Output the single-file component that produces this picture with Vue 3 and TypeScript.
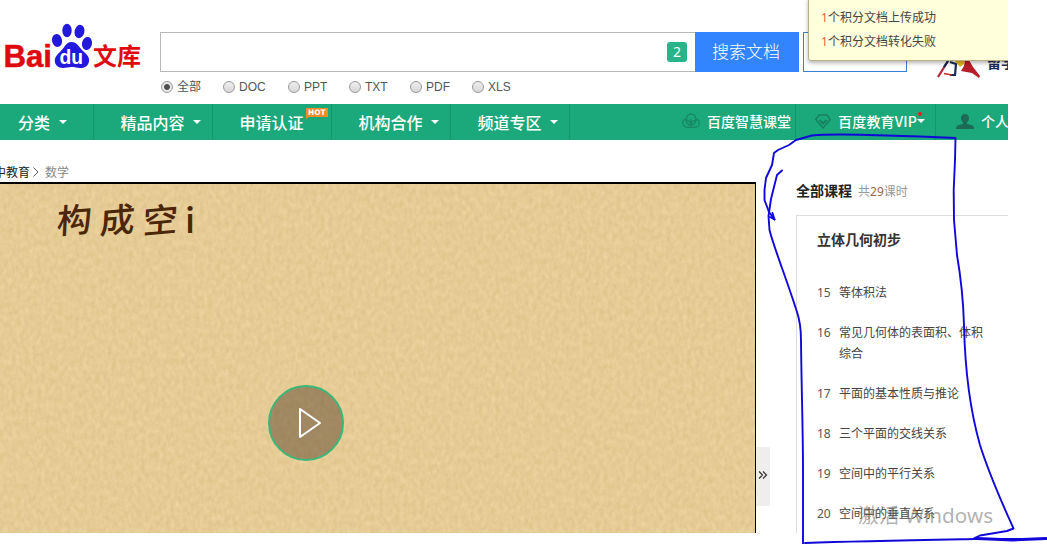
<script setup lang="ts">
interface NavItem { label: string; caret: boolean; hot?: boolean }
interface Lesson { no: number; title: string }

const formats: string[] = ['全部', 'DOC', 'PPT', 'TXT', 'PDF', 'XLS']
const nav: NavItem[] = [
  { label: '分类', caret: true },
  { label: '精品内容', caret: true },
  { label: '申请认证', caret: false, hot: true },
  { label: '机构合作', caret: true },
  { label: '频道专区', caret: true },
]
const notices: string[] = ['个积分文档上传成功', '个积分文档转化失败']
const titleChars: string[] = ['构', '成', '空']
const lessons: Lesson[] = [
  { no: 15, title: '等体积法' },
  { no: 16, title: '常见几何体的表面积、体积综合' },
  { no: 17, title: '平面的基本性质与推论' },
  { no: 18, title: '三个平面的交线关系' },
  { no: 19, title: '空间中的平行关系' },
  { no: 20, title: '空间中的垂直关系' },
]
</script>

<template>
  <div class="screen">
    <div class="site">
      <header class="header">
        <svg class="logo" width="142" height="54" viewBox="0 0 142 54">
          <g fill="#2319dc">
            <ellipse cx="57" cy="20.500" rx="5" ry="6.500" transform="rotate(-12 57 20.500)" />
            <ellipse cx="67" cy="10.500" rx="4.700" ry="6.700" />
            <ellipse cx="79.500" cy="11.500" rx="4.900" ry="6.700" transform="rotate(12 79.500 11.500)" />
            <ellipse cx="87" cy="23.500" rx="5" ry="6.600" transform="rotate(12 87 23.500)" />
            <path d="M71.500 22C77 22 79 27 83 31c4 3.500 6.500 6 6 10-.5 5-4 7.200-9 7-3-.3-5-1-8.500-1s-5 1-8.500 1c-5 0-8-3-8.200-7-.2-4 3-7 6-10 4-4 5.500-9 10.700-9z" />
          </g>
          <text class="latin" x="3.500" y="46.700" textLength="48.500" lengthAdjust="spacingAndGlyphs" fill="#df0a0f" stroke="#df0a0f" stroke-width=".5" font-size="31">Bai</text>
          <text class="latin" x="59.500" y="44" textLength="23.500" lengthAdjust="spacingAndGlyphs" fill="#fff" font-size="20">du</text>
          <text class="han" x="93" y="45.300" textLength="48" lengthAdjust="spacingAndGlyphs" fill="#df0a0f" font-size="24">文库</text>
        </svg>

        <div class="search">
          <div class="row">
            <div class="field"><span class="count">2</span></div>
            <button class="submit">搜索文档</button>
            <div class="upload"></div>
          </div>
          <div class="formats">
            <label v-for="(f, i) in formats" :key="f" :class="'format f' + i">
              <i class="radio" :class="{ on: i === 0 }"></i>{{ f }}
            </label>
          </div>
        </div>

        <div class="promo">
          <svg width="44" height="30" viewBox="0 0 44 30">
            <path d="M2 27L12 11" stroke="#b52430" stroke-width="2.200" />
            <path d="M8 17L12 11M14 12L20 14 19 25H14" stroke="#182b59" stroke-width="2.200" fill="none" />
            <path d="M8 23.500l8 1.500" stroke="#c52a28" stroke-width="1.500" />
            <path d="M18 10H29L28 14 24 17z" fill="#e8b622" />
            <path d="M29 10H33L37 17 44 26 43 28 36 23 25 21 28 16z" fill="#b61d28" />
          </svg>
          <span>留学</span>
        </div>

        <div class="notice">
          <p v-for="n in notices" :key="n"><b>1</b>{{ n }}</p>
        </div>
      </header>

      <nav class="nav">
        <a v-for="(n, i) in nav" :key="n.label" class="item" :class="{ first: i === 0 }">
          {{ n.label }}<i v-if="n.caret" class="caret"></i>
          <svg v-if="n.hot" class="hot" width="22" height="11" viewBox="0 0 22 11">
            <path d="M0 0H22V9H3L0 11z" fill="#ef8b2c" />
            <text x="2" y="7.300" textLength="17.500" lengthAdjust="spacingAndGlyphs" fill="#fff">HOT</text>
          </svg>
        </a>
        <div class="account">
          <a class="link class-link">
            <svg width="18" height="16" viewBox="0 0 18 16" fill="none" stroke="#178a65" stroke-width="1.400">
              <path d="M4.500 6C1.500 6 .8 8 .8 10S2.500 14.200 5 14.200h8c2.500 0 4.200-2 4.200-4.200s-1-4-3.700-4" />
              <path d="M4.500 7C4 3 6 1 9 1s5 2 4.500 6M9 14V6M9 12C6 12 4.500 10 4 7.500 7 7.500 9 9 9 12c0-3 2-4.500 5-4.500-.5 2.500-2 4.500-5 4.500" />
            </svg>
            百度智慧课堂
          </a>
          <a class="link vip-link">
            <svg width="16" height="15" viewBox="0 0 16 15" fill="none" stroke="#17805f" stroke-width="1.500">
              <path d="M4 1H12L15.200 5.500 8 14 .8 5.500z" /><path d="M4.500 6L8 9.500 11.500 6" stroke-width="2" />
            </svg>
            <span>百度教育VIP</span><i class="caret"></i><i class="dot"></i>
          </a>
          <a class="link me-link">
            <svg width="18" height="15" viewBox="0 0 18 15" fill="#1d6b56">
              <path d="M9 0c2.700 0 4.200 2 4 4.500-.2 2-1 3.200-2 4v1.200l5 1.500c1.200.4 2 1.400 2 3.800H0c0-2.400.8-3.400 2-3.800l5-1.500V8.500c-1-.8-1.800-2-2-4C4.800 2 6.300 0 9 0z" />
            </svg>
            个人
          </a>
        </div>
      </nav>

      <main class="main">
        <section class="left">
          <div class="crumbs">
            <span class="parent">高中教育</span>
            <svg width="6" height="10" viewBox="0 0 6 10" fill="none" stroke="#555"><path d="M.5.500L5 5 .5 9.500" /></svg>
            <span class="current">数学</span>
          </div>
          <div class="stage">
            <div class="video">
              <svg class="paper" width="100%" height="100%">
                <filter id="grain" x="0" y="0" width="100%" height="100%" color-interpolation-filters="sRGB">
                  <feTurbulence type="fractalNoise" baseFrequency=".24 .16" numOctaves="3" seed="8" />
                  <feColorMatrix values=".07 .025 0 0 .853  .08 .025 0 0 .744  .11 .025 0 0 .517  0 0 0 0 1" />
                </filter>
                <rect width="100%" height="100%" filter="url(#grain)" />
              </svg>
              <div class="title"><span v-for="c in titleChars" :key="c" class="brush">{{ c }}</span><span class="partial">i</span></div>
              <button class="play">
                <svg width="24" height="32" viewBox="0 0 24 32" fill="none" stroke="#fff" stroke-width="2" stroke-linejoin="round">
                  <path d="M2 2L22 16 2 30z" />
                </svg>
              </button>
            </div>
            <button class="fold">
              <svg width="10" height="8" viewBox="0 0 10 8" fill="none" stroke="#333" stroke-width="1.200"><path d="M1 .5L4.500 4 1 7.500M5 .5L8.500 4 5 7.500" /></svg>
            </button>
          </div>
        </section>

        <aside class="course">
          <div class="course-head"><strong>全部课程</strong><span>共<em>29</em>课时</span></div>
          <div class="panel">
            <h3>立体几何初步</h3>
            <ol>
              <li v-for="l in lessons" :key="l.no"><span class="no">{{ l.no }}</span><span class="name">{{ l.title }}</span></li>
            </ol>
          </div>
        </aside>
      </main>
    </div>

    <div class="watermark">激活 Windows</div>
    <svg class="ink" width="1047" height="544" viewBox="0 0 1047 544" fill="none" stroke="#1108d8" stroke-width="1.900" stroke-linejoin="round" stroke-linecap="round">
      <path d="M774.500 219.500L769 212 764.500 200V190L766 178 772 165 774 153 778 150 789 145 796 140 812 135.500Q828 134 860 134.800L920 136.500 955.500 138 955 160 953.700 190 954 220 957 255Q963 290 964 325C965 370 970 410 980 445 990 477 1003 505 1013.500 528.500L1007 531 980 535.500 974.500 538" />
      <path d="M782 170.500L777 175 771 199 768.500 216 769.500 230C774 248 787 280 797 312Q801 324 801 340C801.500 390 803 430 803 470V544" />
      <path d="M772.500 213L774.500 219.500 770 217M805 543C860 541 920 540 975 539H1047" />
      <path d="M977 538.500L1013 540 1046 538.500" stroke-width="3" />
    </svg>
  </div>
</template>

<style>
html, body { margin: 0; background: #fff; overflow: hidden; }
</style>

<style scoped>
.screen { position: relative; width: 1047px; height: 544px; overflow: hidden; background: #fff; color: #444; font: 12px "Noto Sans", "Noto Sans CJK SC", sans-serif; }
.site { width: 1008px; height: 533px; overflow: hidden; }
button { padding: 0; border: 0; font: inherit; display: flex; align-items: center; justify-content: center; box-sizing: border-box; }
.header { position: relative; display: flex; height: 104px; }
.logo { margin-top: 20px; flex: none; overflow: visible; }
.latin { font-family: "Liberation Sans", sans-serif; font-weight: 700; }
.han { font-family: "Noto Sans CJK SC", sans-serif; font-weight: 700; }
.search { margin: 32px 0 0 18px; width: 747px; flex: none; }
.row { display: flex; height: 40px; }
.field { width: 535px; box-sizing: border-box; border: 1px solid #b8b8b8; border-right: 0; display: flex; align-items: center; justify-content: flex-end; padding-right: 8px; }
.count { width: 20px; height: 20px; border-radius: 3px; background: #26b488; color: #fff; font-size: 14px; line-height: 20px; text-align: center; }
.submit { width: 104px; padding: 0 2px 3px 0; background: #3385ff; color: #fff; font-family: "Noto Sans CJK SC", sans-serif; font-size: 17px; font-weight: 300; }
.upload { width: 104px; box-sizing: border-box; margin-left: 4px; border: 1px solid #3a80d2; }
.formats { display: flex; padding: 7px 0 0 1px; color: #555; font-family: "Liberation Sans", "Noto Sans CJK SC", sans-serif; line-height: 16px; }
.format { display: flex; align-items: center; box-sizing: border-box; width: 62px; white-space: nowrap; }
.f0 { width: 62px; } .f1 { width: 65px; } .f2 { width: 61px; } .f3 { width: 61px; }
.radio { width: 12px; height: 12px; margin-right: 4px; box-sizing: border-box; border: 1px solid #999; border-radius: 50%; background: linear-gradient(#eee, #d7d7d7); }
.radio.on { background: radial-gradient(circle, #505050 0 2.500px, #e9e9e9 3.500px); }
.promo { display: flex; margin: 50px 0 0 29px; color: #1b2a50; font-weight: 700; font-size: 14px; flex: none; }
.promo span { margin: 3px 0 0 7px; line-height: 20px; }
.notice { position: absolute; left: 808px; top: -3px; width: 210px; height: 64px; box-sizing: border-box; padding: 8px 12px; border: 1px solid #bcae85; border-radius: 3px; background: #ffffdc; box-shadow: 0 2px 4px rgba(0, 0, 0, .3); }
.notice p { margin: 0; line-height: 24px; }
.notice b { color: #f0643c; font-weight: 400; }
.nav { display: flex; height: 36px; background: #1ba97b; color: #fff; }
.item { position: relative; display: flex; align-items: center; flex: none; box-sizing: border-box; width: 119px; padding-left: 26.500px; border-right: 1px solid #15956a; font-size: 16px; font-weight: 500; font-family: "Noto Sans CJK SC", sans-serif; white-space: nowrap; }
.item.first { width: 94px; padding-left: 18px; }
.caret { width: 0; height: 0; margin-left: 8.500px; border: 4px solid transparent; border-top-color: #fff; border-bottom: 0; }
.hot { position: absolute; left: 93px; top: 4px; font: 700 7.500px "DejaVu Sans", sans-serif; }
.account { display: flex; margin-left: 112px; font: 500 14px "Noto Sans CJK SC", sans-serif; }
.link { position: relative; display: flex; align-items: center; flex: none; box-sizing: border-box; gap: 7px; white-space: nowrap; border-right: 1px solid #15956a; line-height: 34px; padding-bottom: 2px; }
.class-link { width: 114px; }
.vip-link { width: 140px; padding-left: 19px; letter-spacing: .2px; }
.me-link { padding-left: 20px; }
.vip-link .caret { margin-left: -7px; }
.dot { position: absolute; left: 122px; top: 8px; width: 4px; height: 4px; border-radius: 50%; background: #e91f1f; }
.main { display: flex; height: 393px; }
.left { width: 770px; flex: none; }
.crumbs { display: flex; align-items: center; height: 42px; padding-top: 22px; box-sizing: border-box; margin-left: -18px; }
.crumbs svg { margin: 0 6px 0 3px; }
.current { color: #888; }
.parent { color: #222; }
.stage { display: flex; height: 351px; }
.video { position: relative; width: 756px; box-sizing: border-box; border: solid #000; border-width: 2px 1px 0 0; background: #e5ca94; overflow: hidden; }
.paper { position: absolute; inset: 0; }
.title { position: absolute; left: 57px; top: 9px; display: flex; gap: 8px; color: #4b2709; font: 500 35px/50px "Noto Sans CJK SC", sans-serif; }
.brush { transform: skew(-3deg, -5deg) scaleY(.96); }
.partial { margin-left: -1px; }
.play { position: absolute; left: 268px; top: 201px; width: 76px; height: 76px; border: 2px solid #3bb878; border-radius: 50%; background: rgba(92, 70, 48, .5); padding-left: 8px; }
.fold { width: 14px; height: 59px; margin-top: 265px; background: #efedee; border-radius: 0 2px 2px 0; }
.fold svg { margin: -3px 1px 0 0; flex: none; }
.course { width: 260px; margin-left: 26px; flex: none; }
.course-head { height: 75px; box-sizing: border-box; padding-top: 41px; display: flex; align-items: baseline; line-height: 20px; gap: 6px; }
.course-head strong { font-size: 14px; color: #222; }
.course-head span { color: #999; }
.course-head em { color: #9b6841; font-style: normal; }
.panel { height: 330px; box-sizing: border-box; padding: 14px 0 0 20px; border: 1px solid #ddd; }
h3 { margin: 0; font-size: 14px; line-height: 20px; color: #333; }
ol { list-style: none; margin: 32px 0 0; padding: 0; display: flex; flex-direction: column; gap: 19px; }
li { display: flex; line-height: 21px; }
.no { width: 22px; color: #555; }
.name { width: 150px; }
.watermark { position: absolute; left: 858px; top: 501px; font-size: 20.700px; line-height: 28px; color: rgba(125, 125, 125, .6); white-space: nowrap; }
.ink { position: absolute; inset: 0; }
</style>
